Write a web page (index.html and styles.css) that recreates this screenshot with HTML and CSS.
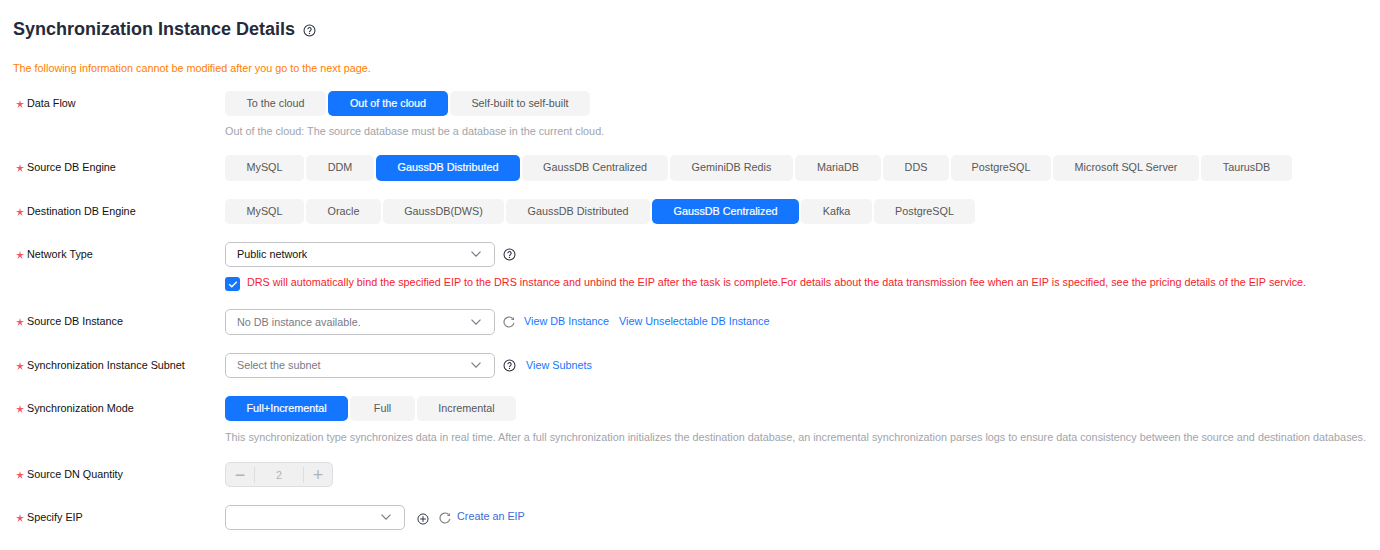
FILE: index.html
```html
<!DOCTYPE html>
<html lang="en">
<head>
<meta charset="utf-8">
<title>Synchronization Instance Details</title>
<link rel="stylesheet" href="styles.css">
</head>
<body>
<svg class="defs" width="0" height="0" aria-hidden="true">
  <symbol id="help" viewBox="0 0 14 14">
    <circle cx="7" cy="7" r="5.9" fill="none" stroke="#252b3a" stroke-width="1.1"/>
    <path d="M5.2 5.7a1.8 1.8 0 1 1 2.8 1.5c-.7.4-1 .8-1 1.4" fill="none" stroke="#252b3a" stroke-width="1.1"/>
    <circle cx="7" cy="10.2" r=".7" fill="#252b3a"/>
  </symbol>
  <symbol id="chev" viewBox="0 0 10 6">
    <path d="M.5 .7L5 5.2 9.5 .7" fill="none" stroke="#73777f" stroke-width="1.1"/>
  </symbol>
  <symbol id="refresh" viewBox="0 0 14 14">
    <path d="M10.900 2.700A5.800 5.800 0 1 0 12.700 8" fill="none" stroke="#808388" stroke-width="1.400"/>
    <path d="M12.800 1.200v3.600H9.200z" fill="#808388"/>
  </symbol>
</svg>
<main class="page">
  <h1 class="title">Synchronization Instance Details <svg class="ico title-ico"><use href="#help"/></svg></h1>
  <p class="warn">The following information cannot be modified after you go to the next page.</p>

  <div class="row">
    <div class="label">Data Flow</div>
    <div class="ctl">
      <div class="seg">
        <span class="opt w101">To the cloud</span><span class="opt on w120">Out of the cloud</span><span class="opt w140">Self-built to self-built</span>
      </div>
      <p class="hint">Out of the cloud: The source database must be a database in the current cloud.</p>
    </div>
  </div>

  <div class="row">
    <div class="label">Source DB Engine</div>
    <div class="ctl">
      <div class="seg tall">
        <span class="opt w79">MySQL</span><span class="opt w68">DDM</span><span class="opt on w144">GaussDB Distributed</span><span class="opt w146">GaussDB Centralized</span><span class="opt w123">GeminiDB Redis</span><span class="opt w86">MariaDB</span><span class="opt w66">DDS</span><span class="opt w100">PostgreSQL</span><span class="opt w146">Microsoft SQL Server</span><span class="opt w91">TaurusDB</span>
      </div>
    </div>
  </div>

  <div class="row">
    <div class="label">Destination DB Engine</div>
    <div class="ctl">
      <div class="seg">
        <span class="opt w79">MySQL</span><span class="opt w75">Oracle</span><span class="opt w121">GaussDB(DWS)</span><span class="opt w144">GaussDB Distributed</span><span class="opt on w147">GaussDB Centralized</span><span class="opt w71">Kafka</span><span class="opt w101">PostgreSQL</span>
      </div>
    </div>
  </div>

  <div class="row">
    <div class="label">Network Type</div>
    <div class="ctl">
      <div class="line">
        <div class="select"><span class="val">Public network</span><svg class="chev"><use href="#chev"/></svg></div>
        <svg class="ico"><use href="#help"/></svg>
      </div>
      <div class="check-line">
        <span class="check"><svg width="14" height="14" viewBox="0 0 14 14"><path d="M3.2 7.2l2.6 2.5 5-5" fill="none" stroke="#fff" stroke-width="1.4"/></svg></span>
        <span class="alert">DRS will automatically bind the specified EIP to the DRS instance and unbind the EIP after the task is complete.For details about the data transmission fee when an EIP is specified, see the pricing details of the EIP service.</span>
      </div>
    </div>
  </div>

  <div class="row">
    <div class="label">Source DB Instance</div>
    <div class="ctl">
      <div class="line tall">
        <div class="select"><span class="ph">No DB instance available.</span><svg class="chev"><use href="#chev"/></svg></div>
        <svg class="ico refresh"><use href="#refresh"/></svg>
        <a class="link first">View DB Instance</a><a class="link">View Unselectable DB Instance</a>
      </div>
    </div>
  </div>

  <div class="row">
    <div class="label">Synchronization Instance Subnet</div>
    <div class="ctl">
      <div class="line">
        <div class="select"><span class="ph up">Select the subnet</span><svg class="chev"><use href="#chev"/></svg></div>
        <svg class="ico"><use href="#help"/></svg>
        <a class="link">View Subnets</a>
      </div>
    </div>
  </div>

  <div class="row">
    <div class="label">Synchronization Mode</div>
    <div class="ctl">
      <div class="seg">
        <span class="opt on w123">Full+Incremental</span><span class="opt w67">Full</span><span class="opt w99">Incremental</span>
      </div>
      <p class="hint loose">This synchronization type synchronizes data in real time. After a full synchronization initializes the destination database, an incremental synchronization parses logs to ensure data consistency between the source and destination databases.</p>
    </div>
  </div>

  <div class="row">
    <div class="label">Source DN Quantity</div>
    <div class="ctl">
      <div class="stepper">
        <span class="step">&minus;</span><span class="num">2</span><span class="step">+</span>
      </div>
    </div>
  </div>

  <div class="row">
    <div class="label">Specify EIP</div>
    <div class="ctl">
      <div class="line">
        <div class="select small"><svg class="chev"><use href="#chev"/></svg></div>
        <svg class="ico plus" viewBox="0 0 14 14"><circle cx="7" cy="7" r="5.9" fill="none" stroke="#252b3a" stroke-width="1.1"/><path d="M3.6 7h6.8M7 3.6v6.800" stroke="#252b3a" stroke-width="1.1"/></svg>
        <svg class="ico refresh-eip"><use href="#refresh"/></svg>
        <a class="link eip">Create an EIP</a>
      </div>
    </div>
  </div>
</main>
</body>
</html>
```
FILE: styles.css
```css
* { box-sizing: border-box; }
html, body { margin: 0; padding: 0; }
body {
  width: 1380px;
  height: 550px;
  overflow: hidden;
  background: #fff;
  font-family: "Liberation Sans", Arial, sans-serif;
  font-size: 10.8px;
  color: #000;
}
.defs { position: absolute; }
.page { padding: 17px 0 0 13px; }
.title {
  margin: 0;
  height: 24px;
  display: flex;
  align-items: center;
  font-size: 18px;
  line-height: 24px;
  font-weight: 700;
  color: #252b3a;
}
.title-ico { margin-left: 8px; margin-top: 2px; width: 13px; height: 13px; }
.warn {
  margin: 19px 0 0;
  height: 16px;
  line-height: 16px;
  color: #ff7d00;
}
.row { display: flex; margin-top: 18px; }
.warn + .row { margin-top: 15px; }
.label {
  width: 212px;
  flex: none;
  padding-left: 14px;
  height: 25px;
  line-height: 25px;
  position: relative;
  color: #111;
}
.label::before {
  content: "";
  position: absolute;
  left: 3px;
  top: 9px;
  width: 8px;
  height: 8px;
  background: #f8565f;
  clip-path: polygon(50% 0, 60% 38%, 100% 38%, 66% 60%, 81% 100%, 50% 73%, 19% 100%, 34% 60%, 0 38%, 40% 38%);
}
.ctl { flex: 1; min-width: 0; }
.seg { display: flex; gap: 2px; }
.opt {
  height: 25px;
  line-height: 25px;
  text-align: center;
  border-radius: 5px;
  background: #f4f4f4;
  color: #575757;
  white-space: nowrap;
  flex: none;
}
.w66 { width: 66px; }
.w67 { width: 65px; }
.w68 { width: 68px; }
.w71 { width: 71px; }
.w75 { width: 75px; }
.w79 { width: 79px; }
.w86 { width: 86px; }
.w91 { width: 91px; }
.w99 { width: 99px; }
.w100 { width: 100px; }
.w101 { width: 101px; }
.w120 { width: 120px; }
.w121 { width: 121px; }
.w123 { width: 123px; }
.w140 { width: 140px; }
.w144 { width: 144px; }
.w146 { width: 146px; }
.w147 { width: 147px; }
.seg.tall .opt { height: 26px; }
.opt.on { background: #1476ff; color: #fff; -webkit-text-stroke: .2px #fff; }
.hint {
  margin: 8px 0 0;
  height: 13px;
  line-height: 14px;
  color: #a1a4ab;
  white-space: nowrap;
}
.hint.loose { margin-top: 9px; height: 14px; }
.line { display: flex; align-items: center; height: 25px; }
.select {
  width: 270px;
  height: 25px;
  border: 1px solid #c2c4c8;
  border-radius: 5px;
  display: flex;
  align-items: center;
  justify-content: space-between;
  padding: 0 13px 0 11px;
  flex: none;
}
.line.tall, .line.tall .select { height: 26px; }
.select.small { width: 180px; justify-content: flex-end; }
.val { color: #111; margin-top: -1px; }
.ph { color: #777b84; }
.ph.up { margin-top: -1px; }
.chev { width: 10px; height: 6px; margin-top: -1px; }
.ico { width: 13px; height: 13px; margin-left: 8px; flex: none; }
.refresh { width: 12px; height: 12px; }
.plus { width: 12px; height: 12px; margin: 3px 0 0 12px; }
.refresh-eip { width: 12px; height: 12px; margin-left: 10px; }
.link { color: #1476ff; margin: -1px 0 0 10px; white-space: nowrap; }
.line.tall .link { margin-top: -3px; }
.link.first { margin-left: 9px; }
.link.eip { color: #3d6ad6; margin-top: -3px; margin-left: 6px; }
.check-line { display: flex; align-items: flex-start; margin-top: 10px; }
.check {
  width: 15px;
  height: 14px;
  background: #1476ff;
  border-radius: 3px;
  flex: none;
  display: flex;
  align-items: center;
  justify-content: center;
}
.alert { margin-left: 7px; line-height: 11px; color: #f5222d; white-space: nowrap; }
.stepper {
  width: 108px;
  height: 25px;
  border: 1px solid #dcdee2;
  border-radius: 5px;
  background: #f0f0f1;
  display: flex;
  align-items: center;
  color: #b0b3b8;
}
.step { width: 28px; text-align: center; font-size: 18px; line-height: 16px; }
.num {
  flex: 1;
  text-align: center;
  height: 16px;
  line-height: 16px;
  border-left: 1px solid #dcdee2;
  border-right: 1px solid #dcdee2;
}
```
